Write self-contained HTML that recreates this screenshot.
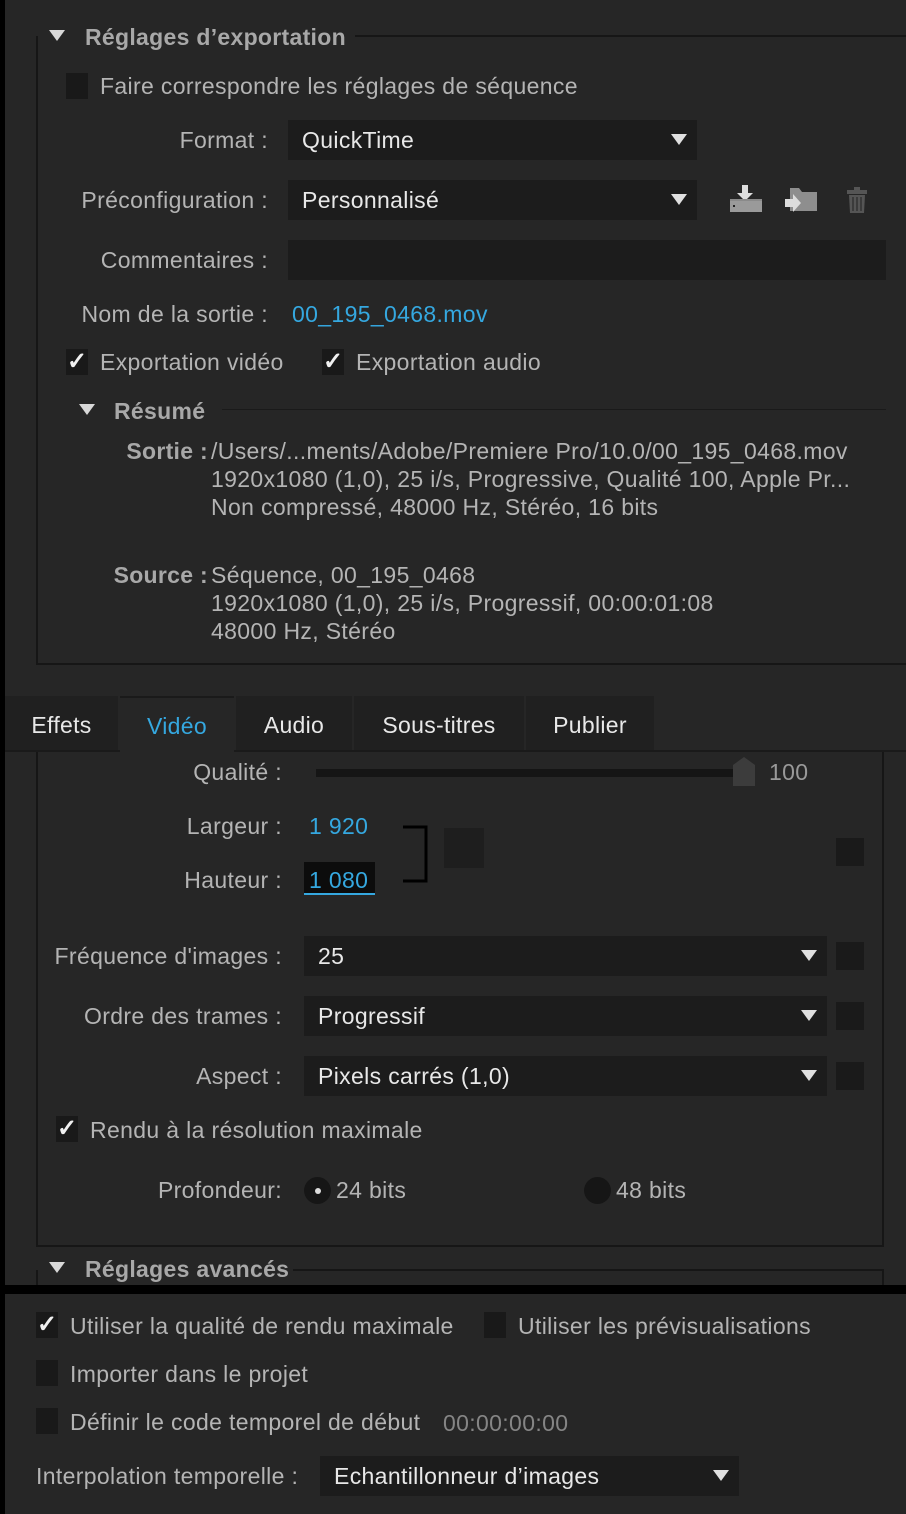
<!DOCTYPE html>
<html><head><meta charset="utf-8"><style>
*{margin:0;padding:0;box-sizing:border-box}
body{width:906px;height:1514px;background:#262626;position:relative;overflow:hidden;font-family:"Liberation Sans",sans-serif;font-size:23px;letter-spacing:0.35px;color:#b4b4b4}
.a{position:absolute;line-height:24px;white-space:nowrap}
.r{text-align:right}
.w{color:#e8e8e8}
.b{color:#35a8e0}
.bd{font-weight:bold;color:#a8a8a8;letter-spacing:0.3px}
.box{position:absolute;background:#1b1b1b}
.ln{position:absolute;background:#161616}
.dd{position:absolute;background:#1c1c1c}
.arr{position:absolute;width:0;height:0;border-left:8px solid transparent;border-right:8px solid transparent;border-top:11px solid #e0e0e0}
.tri{position:absolute;width:0;height:0;border-left:8px solid transparent;border-right:8px solid transparent;border-top:11px solid #d8d8d8}
.cb{position:absolute;width:22px;height:26px;background:#191919;color:#f0f0f0;font-size:24px;font-weight:bold;line-height:26px;text-align:center;letter-spacing:0}
.tab{position:absolute;top:696px;height:56px;background:#202020;color:#e8e8e8;line-height:58px;text-align:center;font-size:23px;letter-spacing:0.3px}
</style></head><body>
<div style="position:absolute;left:0;top:0;width:5px;height:1514px;background:#000"></div>

<div class="tri" style="left:49px;top:30px"></div>
<div class="a bd" style="left:85px;top:25px">Réglages d’exportation</div>
<div class="ln" style="left:355px;top:35px;width:551px;height:2px"></div>
<div class="ln" style="left:36px;top:36px;width:2px;height:629px"></div>
<div class="ln" style="left:36px;top:663px;width:870px;height:2px"></div>

<div class="cb" style="left:66px;top:73px"></div>
<div class="a" style="left:100px;top:74px">Faire correspondre les réglages de séquence</div>

<div class="a r" style="right:638px;top:128px">Format :</div>
<div class="dd" style="left:288px;top:120px;width:409px;height:40px"></div>
<div class="a w" style="left:302px;top:128px">QuickTime</div>
<div class="arr" style="left:671px;top:134px"></div>

<div class="a r" style="right:638px;top:188px">Préconfiguration :</div>
<div class="dd" style="left:288px;top:180px;width:409px;height:40px"></div>
<div class="a w" style="left:302px;top:188px">Personnalisé</div>
<div class="arr" style="left:671px;top:194px"></div>
<svg style="position:absolute;left:728px;top:184px" width="36" height="30"><path d="M14 1h6v8h5l-8 8-8-8h5z" fill="#ddd"/><rect x="2" y="15" width="32" height="13" fill="#8a8a8a"/><rect x="2" y="17" width="32" height="11" fill="#9a9a9a"/><rect x="5" y="21" width="2" height="2" fill="#222"/></svg>
<svg style="position:absolute;left:784px;top:186px" width="36" height="30"><path d="M6 2h9l3 4h15v19H6z" fill="#8e8e8e"/><path d="M1 13h8v-5l8 9-8 9v-5H1z" fill="#ddd"/></svg>
<svg style="position:absolute;left:846px;top:186px" width="24" height="28"><rect x="8" y="1" width="6" height="3" fill="#555"/><rect x="1" y="4" width="20" height="4" fill="#555"/><path d="M3 9h16l-1 18H4z" fill="#555"/><path d="M7 11v14M11 11v14M15 11v14" stroke="#333" stroke-width="1.5"/></svg>

<div class="a r" style="right:638px;top:248px">Commentaires :</div>
<div class="dd" style="left:288px;top:240px;width:598px;height:40px"></div>

<div class="a r" style="right:638px;top:302px">Nom de la sortie :</div>
<div class="a b" style="left:292px;top:302px">00_195_0468.mov</div>

<div class="cb" style="left:66px;top:349px">✓</div>
<div class="a" style="left:100px;top:350px">Exportation vidéo</div>
<div class="cb" style="left:322px;top:349px">✓</div>
<div class="a" style="left:356px;top:350px">Exportation audio</div>

<div class="tri" style="left:79px;top:404px"></div>
<div class="a bd" style="left:114px;top:399px">Résumé</div>
<div class="ln" style="left:222px;top:409px;width:664px;height:1px;background:#1a1a1a"></div>

<div class="a bd r" style="right:698px;top:439px">Sortie :</div>
<div class="a" style="left:211px;top:439px">/Users/...ments/Adobe/Premiere Pro/10.0/00_195_0468.mov</div>
<div class="a" style="left:211px;top:467px">1920x1080 (1,0), 25 i/s, Progressive, Qualité  100, Apple Pr...</div>
<div class="a" style="left:211px;top:495px">Non compressé, 48000  Hz, Stéréo, 16 bits</div>
<div class="a bd r" style="right:698px;top:563px">Source :</div>
<div class="a" style="left:211px;top:563px">Séquence, 00_195_0468</div>
<div class="a" style="left:211px;top:591px">1920x1080 (1,0), 25  i/s, Progressif, 00:00:01:08</div>
<div class="a" style="left:211px;top:619px">48000 Hz, Stéréo</div>

<div class="tab" style="left:5px;width:113px">Effets</div>
<div class="tab" style="left:120px;width:114px;background:#262626;color:#35a8e0;border-top:2px solid #1a1a1a;line-height:56px">Vidéo</div>
<div class="tab" style="left:236px;width:116px">Audio</div>
<div class="tab" style="left:354px;width:170px">Sous-titres</div>
<div class="tab" style="left:526px;width:128px">Publier</div>
<div class="ln" style="left:5px;top:750px;width:115px;height:2px;background:#1a1a1a"></div>
<div class="ln" style="left:234px;top:750px;width:672px;height:2px;background:#1a1a1a"></div>

<div class="ln" style="left:36px;top:752px;width:2px;height:495px"></div>
<div class="ln" style="left:882px;top:752px;width:2px;height:495px"></div>
<div class="ln" style="left:36px;top:1245px;width:848px;height:2px"></div>

<div class="a r" style="right:624px;top:760px">Qualité :</div>
<div class="ln" style="left:316px;top:769px;width:420px;height:8px;background:#151515"></div>
<svg style="position:absolute;left:732px;top:757px" width="24" height="29"><path d="M1 8L12 0l11 8v21H1z" fill="#3c3c3c"/></svg>
<div class="a" style="left:769px;top:760px;color:#999">100</div>

<div class="a r" style="right:624px;top:814px">Largeur :</div>
<div class="a b" style="left:309px;top:814px">1 920</div>
<div class="a r" style="right:624px;top:868px">Hauteur :</div>
<div class="box" style="left:304px;top:862px;width:71px;height:33px;background:#0c0c0c"></div>
<div class="ln" style="left:304px;top:893px;width:71px;height:2px;background:#35a8e0"></div>
<div class="a b" style="left:309px;top:868px">1 080</div>
<svg style="position:absolute;left:402px;top:824px" width="28" height="60"><path d="M1 3h23v54H1" fill="none" stroke="#000" stroke-width="3"/></svg>
<div class="box" style="left:444px;top:828px;width:40px;height:40px;background:#1e1e1e"></div>
<div class="box" style="left:836px;top:838px;width:28px;height:28px;background:#1a1a1a"></div>

<div class="a r" style="right:624px;top:944px">Fréquence d'images :</div>
<div class="dd" style="left:304px;top:936px;width:523px;height:40px"></div>
<div class="a w" style="left:318px;top:944px">25</div>
<div class="arr" style="left:801px;top:950px"></div>
<div class="box" style="left:836px;top:942px;width:28px;height:28px;background:#1a1a1a"></div>

<div class="a r" style="right:624px;top:1004px">Ordre des trames :</div>
<div class="dd" style="left:304px;top:996px;width:523px;height:40px"></div>
<div class="a w" style="left:318px;top:1004px">Progressif</div>
<div class="arr" style="left:801px;top:1010px"></div>
<div class="box" style="left:836px;top:1002px;width:28px;height:28px;background:#1a1a1a"></div>

<div class="a r" style="right:624px;top:1064px">Aspect :</div>
<div class="dd" style="left:304px;top:1056px;width:523px;height:40px"></div>
<div class="a w" style="left:318px;top:1064px">Pixels carrés (1,0)</div>
<div class="arr" style="left:801px;top:1070px"></div>
<div class="box" style="left:836px;top:1062px;width:28px;height:28px;background:#1a1a1a"></div>

<div class="cb" style="left:56px;top:1116px">✓</div>
<div class="a" style="left:90px;top:1118px">Rendu à la résolution maximale</div>

<div class="a r" style="right:624px;top:1178px">Profondeur:</div>
<div class="box" style="left:304px;top:1177px;width:27px;height:27px;border-radius:50%;background:#161616"></div>
<div class="box" style="left:315px;top:1188px;width:6px;height:6px;border-radius:50%;background:#ddd"></div>
<div class="a" style="left:336px;top:1178px">24 bits</div>
<div class="box" style="left:584px;top:1177px;width:27px;height:27px;border-radius:50%;background:#161616"></div>
<div class="a" style="left:616px;top:1178px">48 bits</div>

<div class="tri" style="left:49px;top:1262px"></div>
<div class="a bd" style="left:85px;top:1257px">Réglages avancés</div>
<div class="ln" style="left:293px;top:1269px;width:591px;height:2px"></div>
<div class="ln" style="left:36px;top:1270px;width:2px;height:16px"></div>
<div class="ln" style="left:882px;top:1270px;width:2px;height:16px"></div>

<div style="position:absolute;left:0;top:1285px;width:906px;height:9px;background:#000"></div>

<div class="cb" style="left:36px;top:1312px">✓</div>
<div class="a" style="left:70px;top:1314px">Utiliser la qualité de rendu maximale</div>
<div class="cb" style="left:484px;top:1312px"></div>
<div class="a" style="left:518px;top:1314px">Utiliser les prévisualisations</div>
<div class="cb" style="left:36px;top:1360px"></div>
<div class="a" style="left:70px;top:1362px">Importer dans le projet</div>
<div class="cb" style="left:36px;top:1408px"></div>
<div class="a" style="left:70px;top:1410px">Définir le code temporel de début</div>
<div class="a" style="left:443px;top:1411px;color:#858585">00:00:00:00</div>
<div class="a" style="left:36px;top:1464px">Interpolation temporelle :</div>
<div class="dd" style="left:320px;top:1456px;width:419px;height:40px"></div>
<div class="a w" style="left:334px;top:1464px">Echantillonneur d’images</div>
<div class="arr" style="left:713px;top:1470px"></div>
</body></html>
